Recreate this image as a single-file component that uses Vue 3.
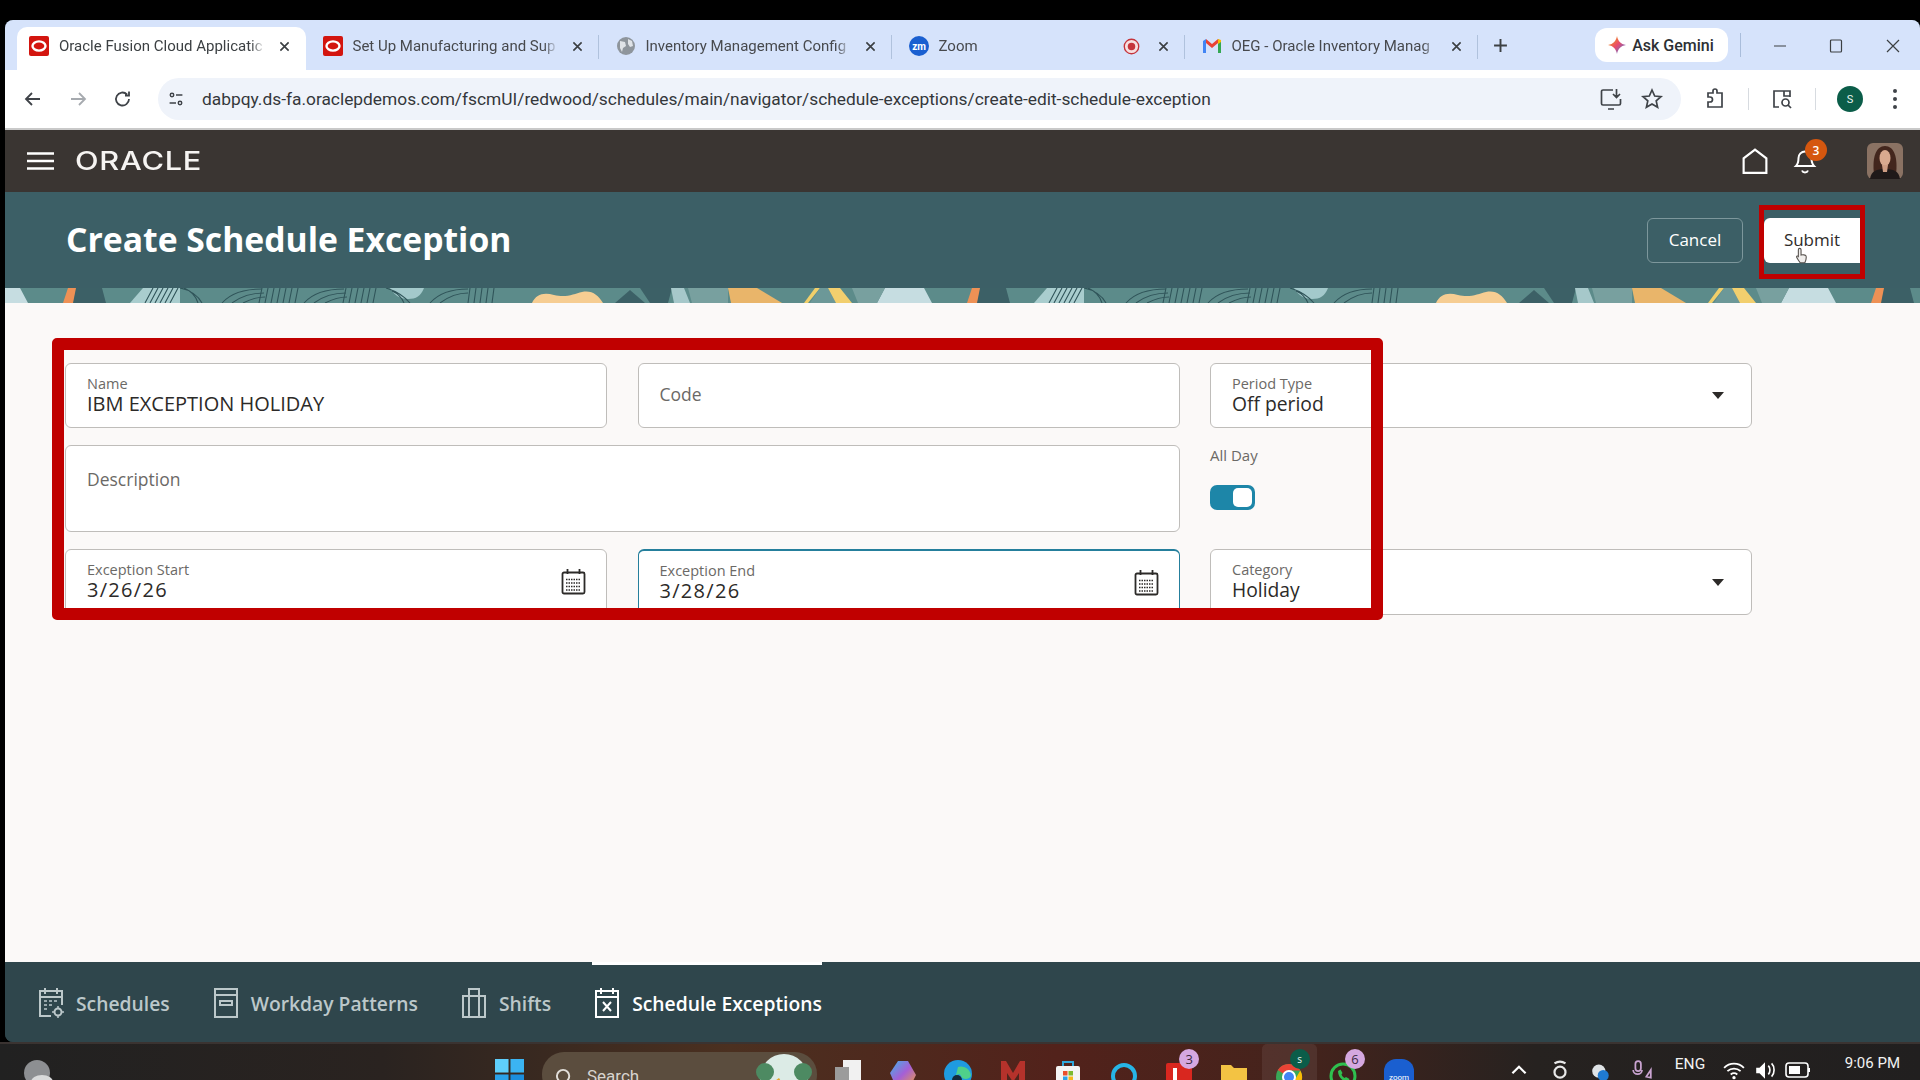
<template>
  <div class="screen">
    <div class="window">
      <!-- browser tabs -->
      <div class="tabstrip">
        <div v-for="(tab, i) in tabs" :key="tab.title" class="tab" :class="{ 'tab-active': i === 0 }">
          <svg v-if="tab.icon === 'oracle'" class="fav" viewBox="0 0 20 20"><rect width="20" height="20" rx="2" fill="#d3150f"/><ellipse cx="10" cy="10" rx="6.5" ry="4.6" fill="none" stroke="#fff" stroke-width="2.4"/></svg>
          <svg v-if="tab.icon === 'globe'" class="fav" viewBox="0 0 20 20"><circle cx="10" cy="10" r="9" fill="#8e959c"/><path d="M4 5l5 1 1 4-3 2-1 4-2-4zM12 3l4 2 1 5-3 1-2-3z" fill="#dfe3e7"/></svg>
          <svg v-if="tab.icon === 'zoom'" class="fav" viewBox="0 0 20 20"><circle cx="10" cy="10" r="10" fill="#1a5fd0"/><text x="10" y="13.5" text-anchor="middle" font-size="10" font-weight="700" font-family="Roboto, sans-serif" fill="#fff">zm</text></svg>
          <svg v-if="tab.icon === 'gmail'" class="fav" viewBox="0 0 20 20"><path d="M1 17V5l3-2v14z" fill="#4285f4"/><path d="M19 17V5l-3-2v14z" fill="#34a853"/><path d="M4 3l6 5 6-5v4l-6 5-6-5z" fill="#ea4335"/><path d="M16 3l3 1v2l-3 2z" fill="#fbbc04"/></svg>
          <span class="tab-title">{{ tab.title }}</span>
          <svg v-if="tab.icon === 'zoom'" class="rec" viewBox="0 0 20 20"><circle cx="10" cy="10" r="8.5" fill="#f7dfe0" stroke="#c5343b" stroke-width="1.6"/><circle cx="10" cy="10" r="4.4" fill="#c5343b"/></svg>
          <svg class="tab-x" viewBox="0 0 12 12"><path d="M1.5 1.5l9 9M10.5 1.5l-9 9"/></svg>
        </div>
        <svg class="plus" viewBox="0 0 14 14"><path d="M7 1v12M1 7h12"/></svg>
        <div class="gemini">
          <svg viewBox="0 0 20 20" class="gemini-star"><path d="M10 0c1 5.500 4 9 10 10-6 1-9 4.500-10 10-1-5.500-4-9-10-10 6-1 9-4.500 10-10z" fill="url(#gem)"/><defs><linearGradient id="gem" x1="0" y1="0" x2="1" y2="1"><stop offset="0" stop-color="#f4b400"/><stop offset="0.5" stop-color="#ea4b6b"/><stop offset="1" stop-color="#2f7df6"/></linearGradient></defs></svg>
          Ask Gemini
        </div>
        <span class="strip-sep"></span>
        <div class="win-controls">
          <svg viewBox="0 0 14 14"><path d="M1 7h12"/></svg>
          <svg viewBox="0 0 14 14"><rect x="1.500" y="1" width="11" height="12" rx="1"/></svg>
          <svg viewBox="0 0 14 14"><path d="M1 1l12 12M13 1L1 13"/></svg>
        </div>
      </div>

      <!-- browser toolbar -->
      <div class="toolbar">
        <svg class="tool" viewBox="0 0 20 20"><path d="M17 10H4M9 4l-6 6 6 6"/></svg>
        <svg class="tool tool-off" viewBox="0 0 20 20"><path d="M3 10h13M11 4l6 6-6 6"/></svg>
        <svg class="tool" viewBox="0 0 20 20"><path d="M16 10a6.500 6.500 0 1 1-2-4.700M16 2.500v4h-4"/></svg>
        <div class="omnibox">
          <svg class="site" viewBox="0 0 20 20"><circle cx="5" cy="5" r="2.200"/><path d="M10 5h8M2 15h8"/><circle cx="15" cy="15" r="2.200"/></svg>
          <span class="url">dabpqy.ds-fa.oraclepdemos.com/fscmUI/redwood/schedules/main/navigator/schedule-exceptions/create-edit-schedule-exception</span>
          <svg class="omni-icon" viewBox="0 0 24 24"><path d="M14 3H4a1.500 1.500 0 0 0-1.500 1.500v12A1.500 1.500 0 0 0 4 18h16a1.500 1.500 0 0 0 1.500-1.500V12M17.500 2v8M14 7l3.500 3.500L21 7M9 22h6"/></svg>
          <svg class="omni-icon" viewBox="0 0 24 24"><path d="M12 3l2.700 6 6.300.6-4.800 4.300 1.400 6.400L12 17l-5.600 3.300 1.400-6.400L3 9.600 9.300 9z"/></svg>
        </div>
        <svg class="tool-r ext" viewBox="0 0 24 24"><path d="M5 6h5V4a2 2 0 0 1 4 0v2h5v14H5v-5h2a2 2 0 0 0 0-5H5z"/></svg>
        <span class="tool-sep"></span>
        <svg class="tool-r" viewBox="0 0 24 24"><path d="M9 20H4V4h16v6M14 4v5h6"/><circle cx="15.500" cy="15.500" r="3.500"/><path d="M18 18l3 3"/></svg>
        <span class="tool-sep"></span>
        <div class="profile">S</div>
        <svg class="kebab" viewBox="0 0 6 22"><circle cx="3" cy="3" r="2"/><circle cx="3" cy="11" r="2"/><circle cx="3" cy="19" r="2"/></svg>
      </div>

      <!-- oracle header -->
      <header class="app-header">
        <svg class="burger" viewBox="0 0 27 18"><path d="M0 1.500h27M0 9h27M0 16.500h27"/></svg>
        <span class="oracle">ORACLE</span>
        <div class="header-right">
          <svg class="home" viewBox="0 0 24 24"><path d="M1.500 23V9.500L12 1.500l10.500 8V23z"/></svg>
          <div class="bell">
            <svg viewBox="0 0 24 28"><path d="M3 19c2-2 2.500-4 2.500-8a6.500 6.500 0 0 1 13 0c0 4 .5 6 2.500 8zM9 23.500c1 2.500 5 2.500 6 0"/></svg>
            <span class="badge">3</span>
          </div>
          <svg class="avatar" viewBox="0 0 36 36">
            <rect width="36" height="36" rx="6" fill="#8a7263"/>
            <path d="M7 31C5 14 9 3 18 3s13 11 11 28z" fill="#43261d"/>
            <ellipse cx="18" cy="15" rx="5.500" ry="8" fill="#d9a98f"/>
            <path d="M3 36c1-8 7-10 15-10s14 2 15 10z" fill="#1f1919"/>
            <path d="M15 22h6l-1 7h-4z" fill="#cf9d84"/>
          </svg>
        </div>
      </header>

      <!-- page title -->
      <section class="title-bar">
        <h1>Create Schedule Exception</h1>
        <div class="actions">
          <button class="btn btn-cancel">Cancel</button>
          <button class="btn btn-submit">
            Submit
            <span class="red-mark"></span>
            <svg class="hand" viewBox="0 0 14 20"><path d="M5 1.500c1 0 1.500.6 1.500 1.500v6c1.500-.5 5-.5 5.500.8.500 1.700 0 5-1.300 7.700H5.500C4 15 2 13 1.500 11c0-1 1-1.400 2-.5V3c0-1 .5-1.500 1.500-1.500z"/></svg>
          </button>
        </div>
      </section>

      <!-- decorative strip -->
      <svg class="banner" width="100%" height="15">
        <defs>
          <pattern id="strip" patternUnits="userSpaceOnUse" x="-5" y="0" width="904" height="15">
            <rect width="904" height="15" fill="#5c8b8a"/>
            <polygon points="-27,15 -20,0 20,0 28,15" fill="#c6dde1"/>
            <polygon points="877,15 885,0 925,0 932,15" fill="#c6dde1"/>
            <polygon points="68,0 79,0 75,15 63,15" fill="#ee9155"/>
            <polygon points="76,0 102,0 106,15 73,15" fill="#3c6066"/>
            <polygon points="143,0 180,0 180,15 130,15" fill="#a9cdce"/>
            <path d="M390 0h34c-3 8-8 11-16 11s-14-4-18-11z" fill="#a3c9cb"/>
            <g fill="none" stroke="#2f5459" stroke-width="1.100">
              <path d="M145 15l8-15M150 15l8-15M155 15l8-15M160 15l8-15M165 15l8-15M170 15l8-15"/>
              <path d="M180 0c10 2 18 8 22 15M184 0c7 3 12 8 14 15"/>
              <path d="M222 15c8-9 22-14 40-14M232 15c8-6 18-10 32-10M243 15c6-3 12-6 22-6"/>
              <path d="M262 0l-3 15M268 0l-3 15M274 0l-3 15M280 0l-3 15M286 0l-3 15M292 0l-3 15M298 0l-3 15"/>
              <path d="M304 15c8-9 22-14 40-14M314 15c8-6 18-10 32-10M325 15c6-3 12-6 22-6"/>
              <path d="M346 0l-3 15M352 0l-3 15M358 0l-3 15M364 0l-3 15M370 0l-3 15M376 0l-3 15"/>
              <path d="M386 0c10 3 18 8 24 15M392 3c7 3 10 7 12 12"/>
              <path d="M430 15c8-9 22-14 38-14M440 15c8-6 18-10 28-10"/>
              <path d="M470 0l-2 15M476 0l-2 15M482 0l-2 15M488 0l-2 15M494 0l-2 15"/>
            </g>
            <path d="M532 15c4-9 12-11 22-8 12 3 20-1 28-3 10-2 16 3 21 11z" fill="#f6cd92"/>
            <polygon points="615,15 630,2 645,15" fill="#3c6066"/>
            <polygon points="640,0 672,0 668,15 650,15" fill="#3c6066"/>
            <polygon points="671,0 684,0 690,15 674,15" fill="#a6c8ca"/>
            <polygon points="688,0 728,0 728,15 692,15" fill="#78a09f"/>
            <polygon points="728,0 757,0 782,15 731,15" fill="#e9b56a"/>
            <polygon points="815,0 820,0 808,15 804,15" fill="#f0cf6a"/>
            <polygon points="820,0 828,0 836,15 810,15" fill="#6c9898"/>
            <polygon points="828,0 840,0 852,15 836,15" fill="#f2cf6e"/>
            <polygon points="852,0 885,0 877,15 858,15" fill="#78a09f"/>
          </pattern>
        </defs>
        <rect width="100%" height="15" fill="url(#strip)"/>
      </svg>

      <!-- form -->
      <main class="content">
        <div class="form-wrap">
          <div class="form-grid">
            <div class="field">
              <span class="label">Name</span>
              <span class="value value-name">IBM EXCEPTION HOLIDAY</span>
            </div>
            <div class="field field-empty"><span class="placeholder">Code</span></div>
            <div class="field field-select">
              <div class="stack">
                <span class="label">Period Type</span>
                <span class="value">Off period</span>
              </div>
              <span class="caret"></span>
            </div>

            <div class="field field-desc"><span class="placeholder">Description</span></div>
            <div class="allday">
              <span class="allday-label">All Day</span>
              <span class="toggle"><span class="knob"></span></span>
            </div>

            <div class="field field-select">
              <div class="stack">
                <span class="label">Exception Start</span>
                <span class="value value-date">3/26/26</span>
              </div>
              <svg class="cal" viewBox="0 0 25 26">
                <path d="M6.500 0v5M18.500 0v5" />
                <rect x="1.500" y="3.500" width="22" height="21" rx="1.500" />
                <path class="cal-dots" d="M5 10.500h15M5 14h15M5 17.500h15M5 21h15" />
              </svg>
            </div>
            <div class="field field-select field-focus">
              <div class="stack">
                <span class="label">Exception End</span>
                <span class="value value-date">3/28/26</span>
              </div>
              <svg class="cal" viewBox="0 0 25 26">
                <path d="M6.500 0v5M18.500 0v5" />
                <rect x="1.500" y="3.500" width="22" height="21" rx="1.500" />
                <path class="cal-dots" d="M5 10.500h15M5 14h15M5 17.500h15M5 21h15" />
              </svg>
            </div>
            <div class="field field-select">
              <div class="stack">
                <span class="label">Category</span>
                <span class="value">Holiday</span>
              </div>
              <span class="caret"></span>
            </div>
          </div>
          <div class="red-box"></div>
        </div>
      </main>

      <!-- bottom tabs -->
      <nav class="bottom-nav">
        <div class="nav-item">
          <svg viewBox="0 0 26 32"><path d="M7 1v6M19 1v6M13 29H2V4h22v14M2 10h22"/><path class="thin" d="M6 14h3M11 14h3M16 14h3M6 18h3M11 18h3M6 22h3"/><circle cx="20" cy="25" r="3.500"/><path class="thin" d="M20 19v2M20 29v2M14 25h2M24 25h2"/></svg>
          Schedules
        </div>
        <div class="nav-item">
          <svg viewBox="0 0 26 32"><rect x="2" y="2" width="22" height="28"/><path d="M2 8h22M7 14h12v4H7z"/></svg>
          Workday Patterns
        </div>
        <div class="nav-item">
          <svg viewBox="0 0 26 32"><rect x="2" y="9" width="22" height="21"/><path d="M8 9V2h10v7M8 9v21M18 9v21"/></svg>
          Shifts
        </div>
        <div class="nav-item nav-active">
          <svg viewBox="0 0 26 32"><path d="M7 1v6M19 1v6"/><rect x="2" y="4" width="22" height="26"/><path d="M2 10h22M9 15l8 9M17 15l-8 9"/></svg>
          Schedule Exceptions
        </div>
      </nav>
    </div>

    <!-- windows taskbar -->
    <footer class="taskbar">
      <svg class="weather" viewBox="0 0 30 30"><circle cx="14" cy="15" r="13" fill="#8d8f92"/><ellipse cx="19" cy="24" rx="11" ry="7" fill="#d9dadb"/></svg>
      <svg class="win-logo" viewBox="0 0 30 30">
        <rect x="0" y="0" width="14" height="14" fill="#5fcffb"/><rect x="16" y="0" width="14" height="14" fill="#3bb4f2"/>
        <rect x="0" y="16" width="14" height="14" fill="#2aa2ea"/><rect x="16" y="16" width="14" height="14" fill="#1b8ede"/>
      </svg>
      <div class="search">
        <svg viewBox="0 0 20 20"><circle cx="8.500" cy="8.500" r="6.500"/><path d="M13 13l5 5"/></svg>
        <span>Search</span>
        <svg class="search-art" viewBox="0 0 62 36"><circle cx="31" cy="24" r="24" fill="#dcebe6"/><circle cx="12" cy="18" r="9" fill="#4d8a62"/><circle cx="50" cy="18" r="9" fill="#4d8a62"/><path d="M12 34l14-10 6 10z" fill="#e8a526"/><path d="M34 34l8-8 8 8z" fill="#e9d4a8"/></svg>
      </div>
      <div class="tb-apps">
        <span class="app"><svg viewBox="0 0 30 30"><rect x="10" y="1" width="18" height="24" fill="#f1f1f1"/><rect x="2" y="8" width="14" height="20" fill="#9b9b9b"/></svg></span>
        <span class="app"><svg viewBox="0 0 30 30"><path d="M10 2h10l8 14-6 12H8L2 14z" fill="url(#cop)"/><defs><linearGradient id="cop" x1="0" y1="0" x2="1" y2="1"><stop offset="0" stop-color="#3fb4e8"/><stop offset="0.5" stop-color="#a55fd6"/><stop offset="1" stop-color="#f0a13c"/></linearGradient></defs></svg></span>
        <span class="app"><svg viewBox="0 0 30 30"><circle cx="15" cy="15" r="14" fill="#1f9be0"/><path d="M15 8a10 10 0 0 1 13 9c-2 4-9 4-10 0-1-3-6-2-6 3" fill="#4fd08a"/><circle cx="14" cy="21" r="5" fill="#142a3b"/></svg></span>
        <span class="app"><svg viewBox="0 0 30 30"><path d="M3 29V2h5l7 12 7-12h5v27h-6V14l-6 9-6-9v15z" fill="#b5322b"/></svg></span>
        <span class="app"><svg viewBox="0 0 30 30"><rect x="3" y="7" width="24" height="23" rx="2" fill="#f4f4f4"/><path d="M10 7V3h10v4" fill="none" stroke="#2fa8dc" stroke-width="2"/><rect x="10" y="12" width="4.500" height="4.500" fill="#e94f2e"/><rect x="15.500" y="12" width="4.500" height="4.500" fill="#7cba2f"/><rect x="10" y="17.500" width="4.500" height="4.500" fill="#2aa2ea"/><rect x="15.500" y="17.500" width="4.500" height="4.500" fill="#f5b81c"/></svg></span>
        <span class="app"><svg viewBox="0 0 30 30"><circle cx="15" cy="17" r="11" fill="none" stroke="#27b5e6" stroke-width="4"/></svg></span>
        <span class="app app-badge"><svg viewBox="0 0 30 30"><rect x="2" y="4" width="26" height="26" rx="2" fill="#d9271f"/><path d="M11 9v14h8" fill="none" stroke="#fff" stroke-width="4"/></svg><i>3</i></span>
        <span class="app"><svg viewBox="0 0 30 30"><path d="M2 6h10l3 3h13v21H2z" fill="#f3c343"/><rect x="8" y="22" width="14" height="8" fill="#3aa7c9"/></svg></span>
        <span class="app app-on app-badge"><svg viewBox="0 0 30 30"><circle cx="15" cy="18" r="13" fill="#3aa757"/><path d="M15 5a13 13 0 0 1 11.300 6.500H15a6.500 6.500 0 0 0-5.600 3.200L3.800 11A13 13 0 0 1 15 5z" fill="#e94335"/><path d="M26.300 11.500a13 13 0 0 1-11.300 19.500l5.600-9.700z" fill="#fbbc04"/><circle cx="15" cy="18" r="6" fill="#4285f4" stroke="#fff" stroke-width="2"/></svg><i class="i-green">s</i></span>
        <span class="app app-badge"><svg viewBox="0 0 30 30"><circle cx="14" cy="17" r="12" fill="none" stroke="#2fc04f" stroke-width="3"/><path d="M9 12c0 6 5 11 10 11l1.500-3-3.500-2-1.500 1c-1.500-1-2.500-2-3-3.500l1-1.500-2-3.500z" fill="#2fc04f"/></svg><i>6</i></span>
        <span class="app"><svg viewBox="0 0 30 30"><rect x="0" y="0" width="30" height="34" rx="12" fill="#1a5fd0"/><text x="15" y="21" text-anchor="middle" font-size="8" font-family="Roboto, sans-serif" fill="#fff">zoom</text></svg></span>
      </div>
      <div class="tray">
        <svg class="tray-icon" viewBox="0 0 20 20"><path d="M4 13l6-6 6 6" fill="none" stroke="#fff" stroke-width="2"/></svg>
        <svg class="tray-icon" viewBox="0 0 20 20"><circle cx="10" cy="12" r="5" fill="none" stroke="#e8e8e8" stroke-width="2"/><path d="M5 4c3-2 7-2 10 0" fill="none" stroke="#e8e8e8" stroke-width="2"/></svg>
        <svg class="tray-icon" viewBox="0 0 20 20"><circle cx="8" cy="11" r="6" fill="#dfe3e6"/><circle cx="12" cy="15" r="5" fill="#1f7ad1"/></svg>
        <svg class="tray-icon" viewBox="0 0 20 20"><rect x="4" y="2" width="5" height="9" rx="2.500" fill="none" stroke="#c9a3d0" stroke-width="1.600"/><path d="M2 10c0 5 8 5 8 0M14 16l4-6v7z" fill="none" stroke="#c9a3d0" stroke-width="1.600"/></svg>
        <div class="lang">ENG</div>
        <svg class="tray-icon tray-near" viewBox="0 0 20 20"><path d="M1 8c5-5 13-5 18 0M4 11c3.500-3 8.500-3 12 0M7 14c2-1.500 4-1.500 6 0" fill="none" stroke="#fff" stroke-width="1.700"/><circle cx="10" cy="17" r="1.500" fill="#fff"/></svg>
        <svg class="tray-icon tray-near" viewBox="0 0 20 20"><path d="M2 8h3l5-5v15l-5-5H2z" fill="#fff"/><path d="M13 6c2 2 2 6 0 8M16 4c3 3 3 9 0 12" fill="none" stroke="#fff" stroke-width="1.500"/></svg>
        <svg class="tray-icon tray-batt" viewBox="0 0 26 20"><rect x="1" y="3" width="22" height="14" rx="3" fill="none" stroke="#fff" stroke-width="1.600"/><rect x="4" y="6" width="11" height="8" fill="#fff"/><rect x="23" y="8" width="2" height="4" fill="#fff"/></svg>
        <div class="clock">9:06 PM</div>
      </div>
    </footer>
  </div>
</template>

<script setup>
// titles as the browser shows them, cut off by the tab width
const tabs = [
  { title: 'Oracle Fusion Cloud Applicatic', icon: 'oracle' },
  { title: 'Set Up Manufacturing and Sup', icon: 'oracle' },
  { title: 'Inventory Management Config', icon: 'globe' },
  { title: 'Zoom', icon: 'zoom' },
  { title: 'OEG - Oracle Inventory Manag', icon: 'gmail' }
]
</script>

<style>
html,
body {
  margin: 0;
  background: #000;
}
</style>

<style scoped>
.screen {
  width: 1920px;
  height: 1080px;
  display: flex;
  flex-direction: column;
  background: #000;
  overflow: hidden;
  padding-top: 20px;
  box-sizing: border-box;
  font-family: "Open Sans", "Noto Sans", sans-serif;
}

.window {
  height: 1022px;
  margin-left: 5px;
  display: flex;
  flex-direction: column;
  border-radius: 8px 8px 0 8px;
  overflow: hidden;
  background: #2f464c;
}

/* tabs */
.tabstrip {
  height: 50px;
  flex: none;
  display: flex;
  align-items: flex-end;
  padding-left: 12px;
  background: #d6e3fb;
  position: relative;
}

.tab {
  width: 293px;
  height: 43px;
  flex: none;
  box-sizing: border-box;
  display: flex;
  align-items: center;
  padding: 0 16px 5px 17px;
  background: linear-gradient(#b0c2dd, #b0c2dd) right 0 top 8px / 1px 24px no-repeat;
  font-family: Roboto, sans-serif;
  font-size: 15px;
  color: #47494d;
}

.tab-active {
  width: 288.5px;
  padding-left: 12px;
  background: #fff;
  border-radius: 10px 10px 0 0;
  color: #3c4043;
}

.fav {
  width: 20px;
  height: 20px;
  flex: none;
  margin-right: 10px;
}

.tab-title {
  flex: 1;
  min-width: 0;
  white-space: nowrap;
  -webkit-mask-image: linear-gradient(90deg, #000 93%, transparent 100%);
  mask-image: linear-gradient(90deg, #000 93%, transparent 100%);
}

.rec {
  width: 17px;
  height: 17px;
  flex: none;
  margin-right: 18px;
}

.tab-x {
  width: 11px;
  height: 11px;
  flex: none;
  margin-left: 14px;
  fill: none;
  stroke: #3c4043;
  stroke-width: 1.8;
}

.rec + .tab-x {
  margin-left: 0;
}

.plus {
  width: 15px;
  height: 15px;
  margin: 0 0 17px 15px;
  fill: none;
  stroke: #3c4043;
  stroke-width: 1.8;
}

.gemini {
  width: 133px;
  height: 34px;
  margin: 0 0 8px 87px;
  flex: none;
  display: flex;
  align-items: center;
  justify-content: center;
  gap: 6px;
  background: #fff;
  border-radius: 12px;
  font-family: Roboto, sans-serif;
  font-size: 16px;
  font-weight: 500;
  color: #2d3034;
}

.gemini-star {
  width: 18px;
  height: 18px;
}

.strip-sep {
  width: 1px;
  height: 24px;
  margin: 0 0 13px 12px;
  background: #a9bddb;
}

.win-controls {
  display: flex;
  gap: 42.5px;
  margin: 0 0 17px 32px;
}

.win-controls svg {
  width: 14px;
  height: 14px;
  fill: none;
  stroke: #3c4043;
  stroke-width: 1.2;
}

/* toolbar */
.toolbar {
  height: 58px;
  flex: none;
  display: flex;
  align-items: center;
  padding-left: 18px;
  background: #fff;
  border-bottom: 2px solid #c9c9c9;
}

.tool {
  width: 20px;
  height: 20px;
  flex: none;
  margin-right: 25px;
  fill: none;
  stroke: #3f4348;
  stroke-width: 1.8;
}

.tool-off {
  stroke: #a6aaaf;
}

.omnibox {
  width: 1523px;
  height: 42px;
  flex: none;
  display: flex;
  align-items: center;
  padding: 0 17px 0 10px;
  box-sizing: border-box;
  background: #eff3fa;
  border-radius: 21px;
}

.site {
  width: 16px;
  height: 16px;
  flex: none;
  margin-right: 18px;
  fill: none;
  stroke: #3f4348;
  stroke-width: 1.800;
}

.url {
  flex: 1;
  min-width: 0;
  white-space: nowrap;
  font-family: Roboto, sans-serif;
  font-size: 17.35px;
  color: #34373b;
}

.omni-icon {
  width: 24px;
  height: 24px;
  flex: none;
  margin-left: 17px;
  fill: none;
  stroke: #3f4348;
  stroke-width: 1.700;
}

.tool-r {
  width: 24px;
  height: 24px;
  flex: none;
  fill: none;
  stroke: #3f4348;
  stroke-width: 1.700;
}

.ext {
  margin-left: 22px;
}

.tool-sep {
  width: 1px;
  height: 22px;
  flex: none;
  margin: 0 21px;
  background: #d7dbe0;
}

.profile {
  width: 26px;
  height: 26px;
  flex: none;
  margin-left: 0;
  border-radius: 50%;
  display: flex;
  align-items: center;
  justify-content: center;
  background: #0b5d49;
  color: #e9f4f0;
  font-family: Roboto, sans-serif;
  font-size: 11px;
}

.kebab {
  width: 6px;
  height: 22px;
  flex: none;
  margin-left: 29px;
  fill: #3f4348;
}

/* app header */
.app-header {
  height: 62px;
  flex: none;
  display: flex;
  align-items: center;
  padding: 0 17px 0 22px;
  background: #3a3532;
}

.burger {
  width: 27px;
  height: 18px;
  fill: none;
  stroke: #fff;
  stroke-width: 2.600;
}

.oracle {
  margin-left: 21px;
  font-family: Inter, sans-serif;
  font-size: 25px;
  font-weight: 500;
  letter-spacing: 0.6px;
  color: #f6f4f2;
  display: inline-block;
  transform: scaleX(1.23);
  transform-origin: left center;
}

.header-right {
  margin-left: auto;
  display: flex;
  align-items: center;
}

.home {
  width: 26px;
  height: 26px;
  fill: none;
  stroke: #fff;
  stroke-width: 2;
}

.bell {
  position: relative;
  width: 24px;
  height: 28px;
  margin-left: 25px;
}

.bell svg {
  width: 24px;
  height: 28px;
  fill: none;
  stroke: #fff;
  stroke-width: 2;
}

.badge {
  position: absolute;
  top: -8px;
  left: 12px;
  width: 22px;
  height: 22px;
  border-radius: 50%;
  background: #d5570f;
  color: #fff;
  font-size: 12px;
  font-weight: 600;
  display: flex;
  align-items: center;
  justify-content: center;
}

.avatar {
  width: 36px;
  height: 36px;
  margin-left: 50px;
}

/* title */
.title-bar {
  height: 96px;
  flex: none;
  display: flex;
  align-items: center;
  justify-content: space-between;
  padding: 0 60px 0 61px;
  background: #3c5f66;
}

h1 {
  margin: 0 0 2px;
  font-size: 33.7px;
  font-weight: 700;
  color: #fff;
}

.actions {
  display: flex;
  gap: 21px;
}

.btn {
  width: 96px;
  height: 45px;
  border-radius: 6px;
  font-family: inherit;
  font-size: 17px;
  font-weight: 500;
  padding: 0 0 2px;
  position: relative;
}

.btn-cancel {
  background: transparent;
  border: 1.500px solid #7d979c;
  color: #fff;
}

.btn-submit {
  background: #fff;
  border: none;
  border-radius: 6px 0 0 6px;
  color: #2f2c2a;
}

.red-mark {
  position: absolute;
  left: -5px;
  top: -13px;
  width: 106px;
  height: 74px;
  box-sizing: border-box;
  border: 5px solid #c00000;
}

.hand {
  position: absolute;
  left: 31px;
  top: 29px;
  width: 13px;
  height: 18px;
  fill: #f0eeec;
  stroke: #55504c;
  stroke-width: 1.200;
}

.banner {
  flex: none;
  display: block;
}

/* form */
.content {
  flex: 1;
  min-height: 0;
  background: #fbf9f8;
  padding: 60px 0 0 60px;
  box-sizing: border-box;
}

.form-wrap {
  position: relative;
  width: 1687px;
}

.form-grid {
  display: grid;
  grid-template-columns: 542px 542px 542px;
  grid-template-rows: 65px 87px 66px;
  column-gap: 30.5px;
  row-gap: 17px;
}

.field {
  box-sizing: border-box;
  background: #fff;
  border: 1px solid #bfbdba;
  border-radius: 6px;
  padding: 0 21px 3px;
  display: flex;
  flex-direction: column;
  justify-content: center;
}

.field-select {
  flex-direction: row;
  align-items: center;
  justify-content: space-between;
  padding-right: 20px;
}

.field-desc {
  grid-column: span 2;
  justify-content: flex-start;
  padding-top: 21px;
}

.field-focus {
  border-color: #257f9c;
  border-top-width: 2px;
}

.stack {
  display: flex;
  flex-direction: column;
}

.label {
  font-size: 14.500px;
  line-height: 19px;
  color: #6b6966;
}

.value {
  font-size: 19.300px;
  line-height: 22px;
  color: #2c2a28;
}

.value-name {
  font-size: 20px;
}

.value-date {
  font-size: 20px;
  letter-spacing: 1.300px;
}

.placeholder {
  font-size: 17.500px;
  color: #6b6966;
}

.caret {
  width: 0;
  height: 0;
  margin: 3px 7px 0 0;
  border-left: 6.500px solid transparent;
  border-right: 6.500px solid transparent;
  border-top: 7px solid #2c2a28;
}

.allday {
  display: flex;
  flex-direction: column;
}

.allday-label {
  font-size: 15px;
  line-height: 20px;
  color: #6b6966;
}

.toggle {
  width: 45px;
  height: 25px;
  margin-top: 20px;
  border-radius: 7px;
  background: #1d86a8;
  position: relative;
}

.knob {
  position: absolute;
  right: 3px;
  top: 3px;
  width: 19px;
  height: 19px;
  border-radius: 5px;
  background: #fff;
}

.cal {
  width: 25px;
  height: 26px;
  flex: none;
  margin-top: 3px;
  fill: none;
  stroke: #2c2a28;
  stroke-width: 1.800;
}

.cal-dots {
  stroke-width: 1.700;
  stroke-dasharray: 1.500 1;
}

.red-box {
  position: absolute;
  left: -13px;
  top: -25px;
  width: 1331px;
  height: 282px;
  box-sizing: border-box;
  border: 12px solid #c00000;
  border-radius: 5px;
  pointer-events: none;
}

/* bottom nav */
.bottom-nav {
  height: 80px;
  flex: none;
  display: flex;
  align-items: center;
  gap: 43px;
  padding-left: 33px;
  background: #2f464c;
}

.nav-item {
  position: relative;
  height: 100%;
  display: flex;
  align-items: center;
  gap: 12px;
  padding-top: 2px;
  box-sizing: border-box;
  font-size: 19.300px;
  font-weight: 600;
  color: #bcc8ca;
}

.nav-item svg {
  width: 26px;
  height: 32px;
  fill: none;
  stroke: currentColor;
  stroke-width: 2;
}

.nav-item svg .thin {
  stroke-width: 1.500;
}

.nav-active {
  color: #fff;
}

.nav-active::before {
  content: "";
  position: absolute;
  top: 0;
  left: -2px;
  right: 0;
  height: 3px;
  background: #fff;
}

/* taskbar */
.taskbar {
  height: 38px;
  flex: none;
  display: flex;
  align-items: flex-start;
  position: relative;
  background: linear-gradient(90deg, #212121 0, #2a2320 20%, #4b3020 38%, #52221b 55%, #44231c 68%, #262220 80%, #211f1f 100%);
  border-top: 2px solid #3a3331;
  box-sizing: border-box;
}

.weather {
  width: 30px;
  height: 30px;
  margin: 14px 0 0 23px;
  flex: none;
}

.win-logo {
  width: 29px;
  height: 29px;
  margin: 15px 0 0 442px;
  flex: none;
}

.search {
  width: 275px;
  height: 45px;
  margin: 8px 0 0 18px;
  flex: none;
  box-sizing: border-box;
  display: flex;
  align-items: flex-start;
  padding: 14px 0 0 13px;
  background: #5b4d3e;
  border-radius: 22px;
  color: #d8d4cf;
  font-family: Roboto, sans-serif;
  font-size: 17px;
  line-height: 20px;
  position: relative;
}

.search > svg:first-child {
  width: 19px;
  height: 19px;
  margin: 2px 13px 0 0;
  fill: none;
  stroke: #e2dfda;
  stroke-width: 2;
}

.search-art {
  position: absolute;
  right: 2px;
  top: 2px;
  width: 62px;
  height: 36px;
}

.tb-apps {
  display: flex;
  margin-left: 3px;
  flex: none;
}

.app {
  position: relative;
  width: 55.2px;
  height: 38px;
  display: flex;
  justify-content: center;
  padding-top: 15px;
  box-sizing: border-box;
}

.app svg {
  width: 30px;
  height: 30px;
  flex: none;
}

.app-on {
  background: rgba(255, 255, 255, 0.07);
  border-radius: 5px 5px 0 0;
}

.app i {
  position: absolute;
  top: 5px;
  right: 7px;
  width: 20px;
  height: 20px;
  border-radius: 50%;
  background: #d5a8e0;
  color: #3b2a40;
  font-style: normal;
  font-size: 13px;
  line-height: 20px;
  text-align: center;
}

.app i.i-green {
  background: #0b5d49;
  color: #e9f4f0;
  font-size: 10px;
}

.tray {
  display: flex;
  align-items: flex-start;
  position: absolute;
  left: 1508px;
  right: 20px;
  top: 0;
  color: #f2f2f2;
  font-family: Roboto, sans-serif;
}

.tray-icon {
  width: 22px;
  height: 22px;
  margin: 15px 19px 0 0;
  flex: none;
}

.tray-near {
  margin-right: 9px;
}

.tray-batt {
  width: 26px;
  margin-right: 0;
}

.lang {
  width: 40px;
  margin: 8px 13px 0 -2px;
  font-size: 15.500px;
  line-height: 24px;
  text-align: center;
}

.clock {
  margin: 7px 0 0 auto;
  font-size: 15px;
  line-height: 24px;
  text-align: right;
  white-space: nowrap;
}
</style>
